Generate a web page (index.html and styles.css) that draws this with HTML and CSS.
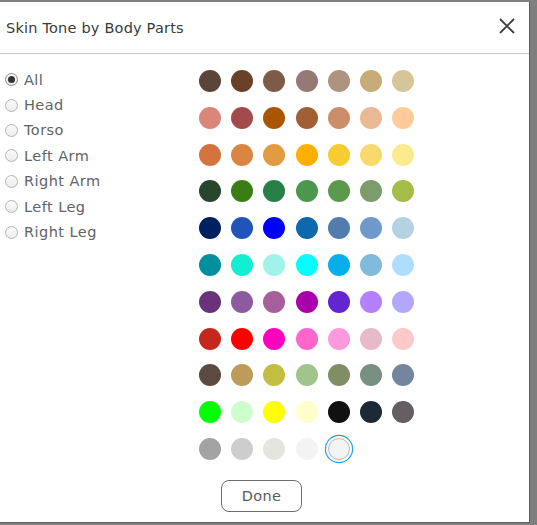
FILE: index.html
```html
<!DOCTYPE html>
<html lang="en">
<head>
<meta charset="utf-8">
<title>Skin Tone by Body Parts</title>
<link rel="stylesheet" href="styles.css">
</head>
<body>
<div class="modal">
  <div class="modal-header">
    <h2 class="modal-title">Skin Tone by Body Parts</h2>
    <button class="close-btn" aria-label="Close">
      <svg width="16" height="16" viewBox="0 0 16 16"><path d="M1 1L15 15M15 1L1 15" stroke="#3e3e3e" stroke-width="1.8" fill="none"/></svg>
    </button>
  </div>
  <div class="modal-body">
    <ul class="part-list">
      <li class="part"><span class="radio checked"></span>All</li>
      <li class="part"><span class="radio"></span>Head</li>
      <li class="part"><span class="radio"></span>Torso</li>
      <li class="part"><span class="radio"></span>Left Arm</li>
      <li class="part"><span class="radio"></span>Right Arm</li>
      <li class="part"><span class="radio"></span>Left Leg</li>
      <li class="part"><span class="radio"></span>Right Leg</li>
    </ul>
    <div class="swatches">
      <span class="swatch" style="background:#5a4539"></span>
      <span class="swatch" style="background:#694028"></span>
      <span class="swatch" style="background:#7c5c46"></span>
      <span class="swatch" style="background:#957977"></span>
      <span class="swatch" style="background:#af9381"></span>
      <span class="swatch" style="background:#c7ac78"></span>
      <span class="swatch" style="background:#d7c59a"></span>

      <span class="swatch" style="background:#da867a"></span>
      <span class="swatch" style="background:#a34b4b"></span>
      <span class="swatch" style="background:#aa5500"></span>
      <span class="swatch" style="background:#a05f35"></span>
      <span class="swatch" style="background:#cc8e69"></span>
      <span class="swatch" style="background:#eab892"></span>
      <span class="swatch" style="background:#ffcc99"></span>

      <span class="swatch" style="background:#d5733f"></span>
      <span class="swatch" style="background:#da8541"></span>
      <span class="swatch" style="background:#e29b40"></span>
      <span class="swatch" style="background:#ffaf00"></span>
      <span class="swatch" style="background:#f5cd30"></span>
      <span class="swatch" style="background:#f8d96d"></span>
      <span class="swatch" style="background:#fdea8d"></span>

      <span class="swatch" style="background:#27462d"></span>
      <span class="swatch" style="background:#3a7d15"></span>
      <span class="swatch" style="background:#287f47"></span>
      <span class="swatch" style="background:#4b974b"></span>
      <span class="swatch" style="background:#5b9a4c"></span>
      <span class="swatch" style="background:#7c9c6b"></span>
      <span class="swatch" style="background:#a4bd47"></span>

      <span class="swatch" style="background:#002060"></span>
      <span class="swatch" style="background:#2154b9"></span>
      <span class="swatch" style="background:#0000ff"></span>
      <span class="swatch" style="background:#0d69ac"></span>
      <span class="swatch" style="background:#527cae"></span>
      <span class="swatch" style="background:#6e99ca"></span>
      <span class="swatch" style="background:#b4d2e4"></span>

      <span class="swatch" style="background:#008f9c"></span>
      <span class="swatch" style="background:#12eed4"></span>
      <span class="swatch" style="background:#9ff3e9"></span>
      <span class="swatch" style="background:#00ffff"></span>
      <span class="swatch" style="background:#04afec"></span>
      <span class="swatch" style="background:#80bbdb"></span>
      <span class="swatch" style="background:#afddff"></span>

      <span class="swatch" style="background:#6b327c"></span>
      <span class="swatch" style="background:#8c5b9f"></span>
      <span class="swatch" style="background:#a75e9b"></span>
      <span class="swatch" style="background:#aa00aa"></span>
      <span class="swatch" style="background:#6225d1"></span>
      <span class="swatch" style="background:#b480ff"></span>
      <span class="swatch" style="background:#b1a7ff"></span>

      <span class="swatch" style="background:#c4281c"></span>
      <span class="swatch" style="background:#ff0000"></span>
      <span class="swatch" style="background:#ff00bf"></span>
      <span class="swatch" style="background:#ff66cc"></span>
      <span class="swatch" style="background:#ff98dc"></span>
      <span class="swatch" style="background:#e8bac8"></span>
      <span class="swatch" style="background:#ffc9c9"></span>

      <span class="swatch" style="background:#5b4a3f"></span>
      <span class="swatch" style="background:#bc9b5d"></span>
      <span class="swatch" style="background:#c1be42"></span>
      <span class="swatch" style="background:#a1c48c"></span>
      <span class="swatch" style="background:#7f8e64"></span>
      <span class="swatch" style="background:#789082"></span>
      <span class="swatch" style="background:#74869d"></span>

      <span class="swatch" style="background:#00ff00"></span>
      <span class="swatch" style="background:#ccffcc"></span>
      <span class="swatch" style="background:#ffff00"></span>
      <span class="swatch" style="background:#ffffcc"></span>
      <span class="swatch" style="background:#111111"></span>
      <span class="swatch" style="background:#1b2a35"></span>
      <span class="swatch" style="background:#635f62"></span>

      <span class="swatch" style="background:#a3a2a5"></span>
      <span class="swatch" style="background:#cdcdcd"></span>
      <span class="swatch" style="background:#e5e4df"></span>
      <span class="swatch" style="background:#f2f3f3"></span>
      <span class="swatch selected" style="background:#f4f4f4"></span>
    </div>
  </div>
  <div class="modal-footer">
    <button class="done-btn">Done</button>
  </div>
</div>
</body>
</html>
```
FILE: styles.css
```css
html, body {
  margin: 0;
  padding: 0;
}

body {
  background: #7f7f7f;
  width: 537px;
  height: 525px;
  overflow: hidden;
  font-family: "DejaVu Sans", "Noto Sans", sans-serif;
}

.modal {
  margin-top: 2px;
  width: 529px;
  height: 520px;
  background: #ffffff;
  border-right: 1px solid #5e5e5e;
  border-bottom: 1px solid #5e5e5e;
  display: flex;
  flex-direction: column;
}

.modal-header {
  height: 51px;
  border-bottom: 1px solid #c9c9c9;
  display: flex;
  align-items: center;
  justify-content: space-between;
  padding: 0 14px 0 6px;
}

.modal-title {
  margin: 0;
  font-size: 14.5px;
  font-weight: normal;
  letter-spacing: 0.2px;
  color: #393b3d;
  padding-top: 1px;
}

.close-btn {
  border: 0;
  background: none;
  padding: 0;
  width: 16px;
  height: 16px;
  display: flex;
  margin-bottom: 4px;
}

.modal-body {
  display: flex;
  padding-top: 13px;
}

.part-list {
  list-style: none;
  margin: 0;
  padding: 0 0 0 5px;
  width: 194px;
}

.part {
  height: 25.4px;
  display: flex;
  align-items: center;
  gap: 6px;
  font-size: 14.5px;
  letter-spacing: 0.45px;
  color: #626365;
}

.radio {
  width: 11px;
  height: 11px;
  border-radius: 50%;
  border: 1px solid #b4b4b4;
  background: linear-gradient(#fbfbfb, #ececec);
  display: inline-flex;
  align-items: center;
  justify-content: center;
}

.radio.checked {
  border-color: #8a8a8a;
}

.radio.checked::after {
  content: "";
  width: 7px;
  height: 7px;
  border-radius: 50%;
  background: #333333;
}

.swatches {
  display: grid;
  grid-template-columns: repeat(7, 22px);
  column-gap: 10.2px;
  row-gap: 14.8px;
  padding-top: 3px;
}

.swatch {
  width: 22px;
  height: 22px;
  border-radius: 50%;
}

.swatch.selected {
  box-sizing: border-box;
  border: 1px solid #b9b9b9;
  box-shadow: 0 0 0 2px #ffffff, 0 0 0 3.2px #22a0ee;
}

.modal-footer {
  margin-top: auto;
  display: flex;
  justify-content: center;
  padding: 0 6px 10px 0;
}

.done-btn {
  width: 81px;
  height: 32px;
  border: 1px solid #6e6e6e;
  border-radius: 8px;
  background: #ffffff;
  font-family: inherit;
  font-size: 14.5px;
  letter-spacing: 0.3px;
  color: #5c5c5c;
  padding: 0;
}
```
